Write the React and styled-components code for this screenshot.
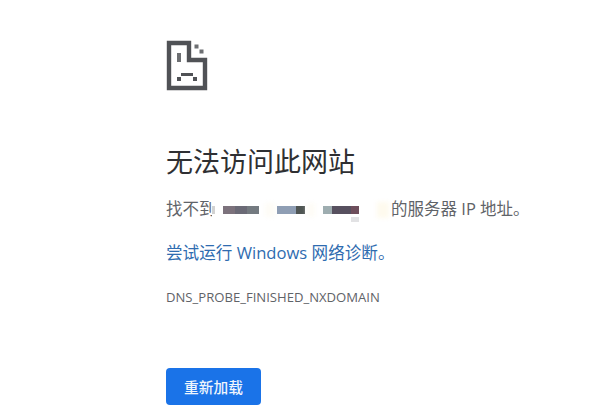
import styled, { createGlobalStyle } from 'styled-components';

const GlobalStyle = createGlobalStyle`
  html, body {
    margin: 0;
    background: #ffffff;
  }
  body {
    font-family: 'Open Sans', 'Noto Sans CJK SC', sans-serif;
  }
`;

const Page = styled.div`
  width: 607px;
  height: 419px;
  box-sizing: border-box;
  padding: 40px 0 0 166px;
  overflow: hidden;
  display: flex;
  flex-direction: column;
  align-items: flex-start;
`;

const IconWrap = styled.svg`
  display: block;
  width: 42px;
  height: 51px;
  margin-bottom: 53px;
  filter: blur(0.35px);
`;

const Title = styled.h1`
  margin: 0 0 16px;
  font-size: 27px;
  line-height: 36px;
  font-weight: 400;
  color: #2f3033;
`;

const Message = styled.div`
  display: flex;
  align-items: center;
  height: 24px;
  margin-bottom: 21px;
  font-size: 16.5px;
  color: #5f6368;
  white-space: pre;
`;

const Redacted = styled.div`
  display: flex;
  align-items: center;
  width: 179px;
  height: 24px;
  margin-left: -3.5px;
  padding-top: 3px;
  box-sizing: border-box;
  background: #ffffff;
`;

const Blur = styled.span`
  position: relative;
  display: block;
  flex: none;
  width: ${(p) => p.$w}px;
  height: ${(p) => p.$h || 8}px;
  margin-left: ${(p) => p.$gap || 0}px;
  background: ${(p) => p.$bg};
  filter: blur(${(p) => p.$soft || 0.6}px);
`;

const Smudge = styled.span`
  position: absolute;
  left: 0;
  top: 11px;
  width: 8px;
  height: 5px;
  background: #e2e2e4;
`;

const LinkText = styled.a`
  display: block;
  height: 24px;
  line-height: 24px;
  margin-bottom: 24px;
  font-size: 16.6px;
  color: #2f6cb0;
  text-decoration: none;
`;

const Code = styled.div`
  font-size: 13.1px;
  line-height: 16px;
  color: #5f6368;
  margin-bottom: 63px;
`;

const Reload = styled.button`
  width: 95px;
  height: 37px;
  padding: 0;
  border: 0;
  border-radius: 4px;
  background: #1a73e8;
  color: #eef5fd;
  font-family: inherit;
  font-size: 14.7px;
  font-weight: 500;
`;

const SadTab = () => (
  <IconWrap viewBox="0 0 42 51" fill="none">
    <path d="M3 3H23V20H39V48H3Z" stroke="#505256" strokeWidth="4.4" />
    <rect x="28.5" y="4.5" width="4" height="4" fill="#6d6f72" />
    <rect x="33.5" y="9.5" width="4" height="4" fill="#6d6f72" />
    <rect x="11" y="13" width="4" height="9" fill="#6d6f72" />
    <rect x="15" y="33" width="12" height="3" fill="#505256" />
    <rect x="11" y="37" width="4" height="4" fill="#505256" />
    <rect x="27" y="37" width="4" height="4" fill="#505256" />
  </IconWrap>
);

export default function App() {
  return (
    <>
      <GlobalStyle />
      <Page>
        <SadTab />
        <Title>无法访问此网站</Title>
        <Message>
          找不到
          <Redacted>
            <Blur $w={3} $bg="#d2d2d2" />
            <Blur $w={12} $gap={8} $bg="#7c727c" />
            <Blur $w={12} $bg="#6b6a76" />
            <Blur $w={12} $bg="#747a80" />
            <Blur $w={10} $h={14} $gap={6} $bg="#fefcf6" $soft={2} />
            <Blur $w={19} $gap={2} $bg="#8f9eb4" />
            <Blur $w={9} $bg="#4f5553" />
            <Blur $w={8} $h={14} $gap={2} $bg="#fefcf6" $soft={2} />
            <Blur $w={9} $gap={8} $bg="#9eadb0" />
            <Blur $w={19} $bg="#57505f" />
            <Blur $w={8} $bg="#6e4e5c">
              <Smudge />
            </Blur>
            <Blur $w={12} $h={16} $gap={18} $bg="#fefaee" $soft={2} />
          </Redacted>
          的服务器 IP 地址。
        </Message>
        <LinkText href="#">尝试运行 Windows 网络诊断。</LinkText>
        <Code>DNS_PROBE_FINISHED_NXDOMAIN</Code>
        <Reload>重新加载</Reload>
      </Page>
    </>
  );
}
